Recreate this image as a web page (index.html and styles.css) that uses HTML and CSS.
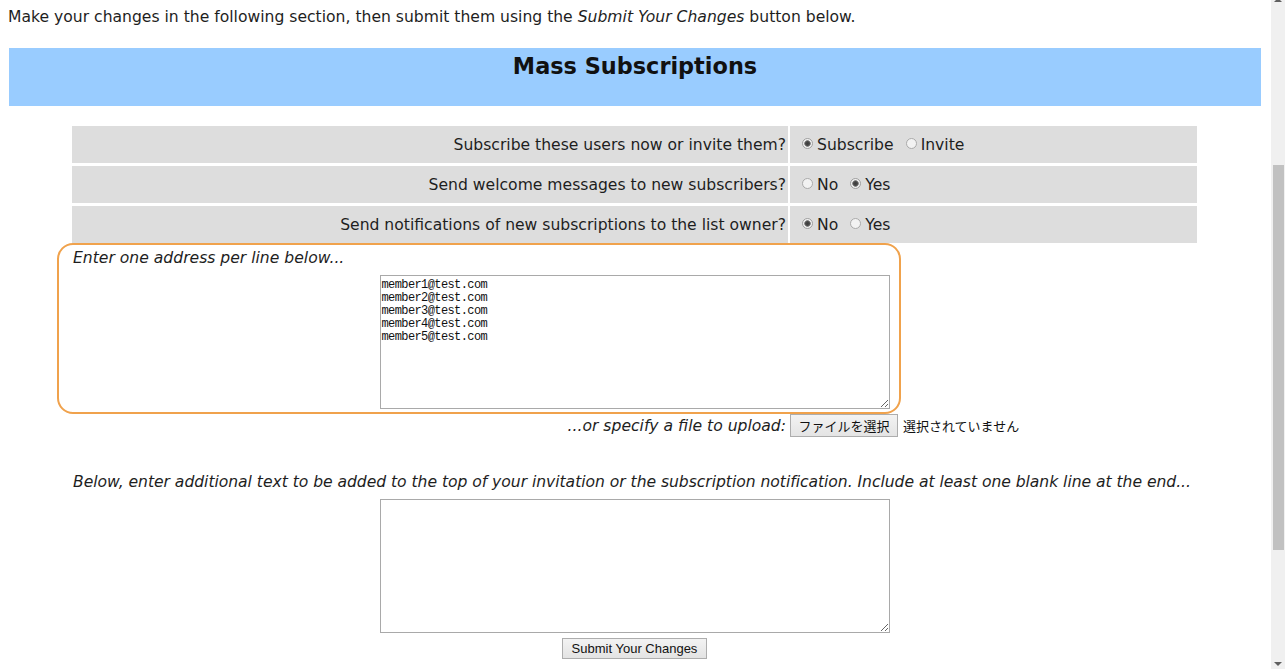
FILE: index.html
```html
<!DOCTYPE html>
<html lang="en">
<head>
<meta charset="utf-8">
<title>Mass Subscriptions</title>
<link rel="stylesheet" href="styles.css">
</head>
<body>
<p class="intro">Make your changes in the following section, then submit them using the <em>Submit Your Changes</em> button below.</p>

<div class="banner"><h2 class="banner-title">Mass Subscriptions</h2></div>

<form class="form">
  <div class="options">
    <div class="label-cell">Subscribe these users now or invite them?</div>
    <div class="value-cell">
      <label class="choice"><input type="radio" name="sub" checked><span>Subscribe</span></label>
      <label class="choice"><input type="radio" name="sub"><span>Invite</span></label>
    </div>
    <div class="label-cell">Send welcome messages to new subscribers?</div>
    <div class="value-cell">
      <label class="choice"><input type="radio" name="welcome"><span>No</span></label>
      <label class="choice"><input type="radio" name="welcome" checked><span>Yes</span></label>
    </div>
    <div class="label-cell">Send notifications of new subscriptions to the list owner?</div>
    <div class="value-cell">
      <label class="choice"><input type="radio" name="notify" checked><span>No</span></label>
      <label class="choice"><input type="radio" name="notify"><span>Yes</span></label>
    </div>
  </div>

  <div class="addresses">
    <p class="hint">Enter one address per line below...</p>
    <div class="area-wrap"><textarea class="area" spellcheck="false">member1@test.com
member2@test.com
member3@test.com
member4@test.com
member5@test.com</textarea></div>
    <div class="highlight"></div>
  </div>

  <div class="upload">
    <div class="upload-label"><em>...or specify a file to upload:</em></div>
    <div class="upload-value">
      <button type="button" class="file-btn">ファイルを選択</button>
      <span class="file-none">選択されていません</span>
    </div>
  </div>

  <p class="hint hint-below">Below, enter additional text to be added to the top of your invitation or the subscription notification. Include at least one blank line at the end...</p>
  <div class="area-wrap"><textarea class="area"></textarea></div>
  <div class="submit-row"><button type="submit" class="submit-btn">Submit Your Changes</button></div>
</form>

<div class="scrollbar">
  <div class="sb-arrow sb-up"></div>
  <div class="sb-thumb"></div>
  <div class="sb-arrow sb-down"></div>
</div>
</body>
</html>
```

FILE: styles.css
```css
html, body {
  overflow: hidden;
  height: 669px;
}
body {
  margin: 0 22px 0 8px;
  font-family: "DejaVu Sans", Verdana, sans-serif;
  font-size: 15.6px;
  color: #1e1e1e;
  background: #ffffff;
}
.intro {
  margin: 0;
  padding-top: 8px;
  line-height: 19px;
}
.banner {
  margin: 21px 0 0 1px;
  width: 1252px;
  height: 58px;
  background: #99ccff;
  box-sizing: border-box;
  padding-top: 5px;
}
.banner-title {
  margin: 0;
  text-align: center;
  font-size: 22.4px;
  line-height: 26px;
  font-weight: bold;
  color: #111;
}
.form {
  width: 1125px;
  margin: 20px 0 0 64px;
}
.options {
  display: grid;
  grid-template-columns: 716px 407px;
  column-gap: 2px;
  row-gap: 3px;
}
.label-cell, .value-cell {
  background: #dddddd;
  height: 37px;
  display: flex;
  align-items: center;
}
.label-cell {
  justify-content: flex-end;
  padding-right: 2px;
}
.value-cell {
  padding-left: 12px;
  gap: 12px;
}
.choice {
  display: flex;
  align-items: center;
  gap: 4px;
}
.choice input {
  appearance: none;
  -webkit-appearance: none;
  margin: 0;
  width: 11px;
  height: 11px;
  border-radius: 50%;
  border: 1px solid #aaaaaa;
  background: #f2f2f2;
  box-sizing: border-box;
  position: relative;
  top: -1px;
}
.choice input:checked {
  background: radial-gradient(circle, #3c3c3c 0, #4a4a4a 2px, #8a8a8a 3px, #f0f0f0 3.6px);
  border-color: #a0a0a0;
}
.addresses {
  position: relative;
  padding-top: 5px;
}
.hint {
  margin: 0 0 0 1px;
  font-style: italic;
  line-height: 20px;
}
.area-wrap {
  display: flex;
  justify-content: center;
}
.addresses .area-wrap {
  margin-top: 7px;
}
.area {
  width: 510px;
  height: 134px;
  box-sizing: border-box;
  margin: 0;
  border: 1px solid #a9a9a9;
  padding: 3px 1px 2px;
  font-family: "Liberation Mono", "DejaVu Sans Mono", monospace;
  font-size: 12px;
  letter-spacing: -0.6px;
  line-height: 13px;
  color: #111;
  resize: both;
  background: #fff;
}
.highlight {
  position: absolute;
  left: -15px;
  top: 0;
  width: 844px;
  height: 171px;
  box-sizing: border-box;
  border: 2.5px solid #f0a24c;
  border-radius: 16px;
  pointer-events: none;
}
.upload {
  display: grid;
  grid-template-columns: 716px 407px;
  column-gap: 2px;
  margin-top: 5px;
  height: 23px;
}
.upload-label {
  display: flex;
  align-items: center;
  justify-content: flex-end;
  padding-right: 2px;
}
.upload-value {
  display: flex;
  align-items: center;
  gap: 5px;
}
.file-btn {
  height: 23px;
  width: 108px;
  padding: 0;
  margin: 0;
  border: 1px solid #adadad;
  background: linear-gradient(#f3f3f3, #e4e4e4);
  font-family: "Noto Sans CJK JP", sans-serif;
  font-size: 13px;
  color: #111;
}
.file-none {
  font-family: "Noto Sans CJK JP", sans-serif;
  font-size: 13px;
  color: #111;
}
.hint-below {
  margin-top: 35px;
  white-space: nowrap;
  letter-spacing: -0.04px;
}
.form > .area-wrap {
  margin-top: 7px;
}
.submit-row {
  display: flex;
  justify-content: center;
  margin-top: 5px;
}
.submit-btn {
  width: 145px;
  height: 21px;
  padding: 0;
  margin: 0;
  border: 1px solid #adadad;
  background: linear-gradient(#f3f3f3, #e3e3e3);
  font-family: "Liberation Sans", Arial, sans-serif;
  font-size: 13px;
  color: #111;
}
.scrollbar {
  position: fixed;
  top: 0;
  right: 0;
  width: 14px;
  height: 669px;
  background: #f0f0f0;
}
.sb-thumb {
  position: absolute;
  left: 2px;
  top: 165px;
  width: 11px;
  height: 385px;
  background: #c1c1c1;
}
.sb-arrow {
  position: absolute;
  left: 3px;
  width: 0;
  height: 0;
  border-left: 4px solid transparent;
  border-right: 4px solid transparent;
}
.sb-up {
  top: -2px;
  border-bottom: 4px solid #606060;
}
.sb-down {
  bottom: 3px;
  border-top: 4px solid #606060;
}
```
